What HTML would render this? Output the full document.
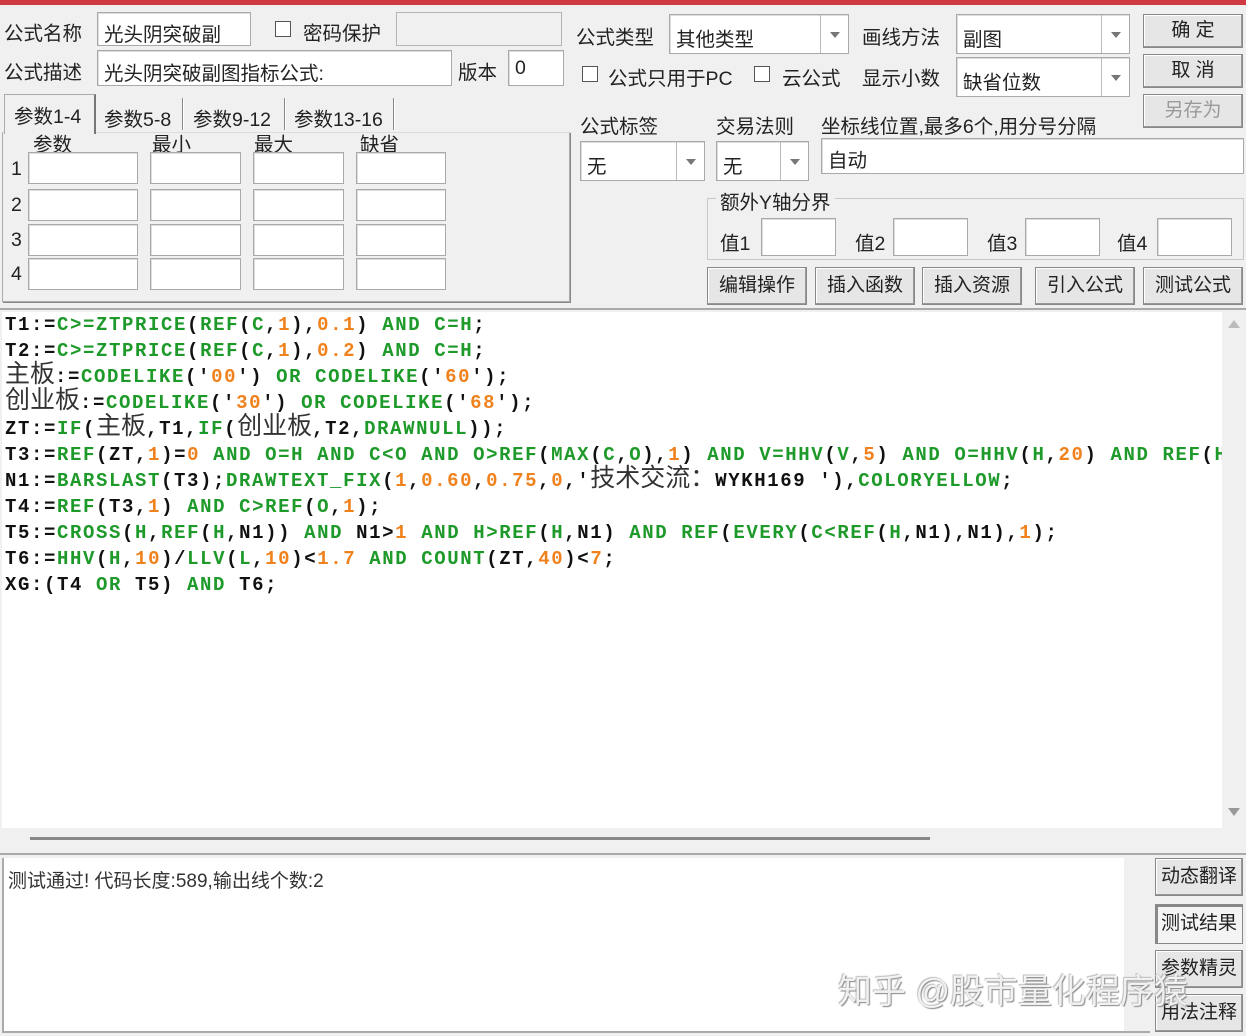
<!DOCTYPE html>
<html><head><meta charset="utf-8"><style>
*{margin:0;padding:0;box-sizing:border-box}
body{width:1246px;height:1036px;background:#f0f0f0;position:relative;overflow:hidden;font-family:"Liberation Sans","Noto Sans CJK SC",sans-serif;font-size:19.5px;color:#222}
.a{position:absolute;white-space:nowrap}
.in{position:absolute;background:#fff;border:1px solid #a9a9a9;box-shadow:inset 1px 1px 0 #ddd}
.ro{position:absolute;background:#f0f0f0;border:1px solid #b4b4b4}
.cb{position:absolute;width:16px;height:16px;background:#fff;border:1px solid #555}
.btn{position:absolute;background:#e6e6e6;border:1px solid #888;box-shadow:inset -1px -1px 0 #999,inset 1px 1px 0 #fff;text-align:center;font-size:19px}
.dd{position:absolute;right:0;top:0;bottom:0;width:28px;border-left:1px solid #bbb}
.dd:after{content:"";position:absolute;left:9px;top:50%;margin-top:-2px;border-left:5px solid transparent;border-right:5px solid transparent;border-top:6px solid #777}
#code{position:absolute;left:2px;top:312px;width:1220px;height:516px;background:#fff;overflow:hidden}
.ln{position:absolute;left:3px;height:26px;line-height:26px;font-family:"Liberation Mono",monospace;font-weight:bold;font-size:19px;letter-spacing:1.6px;white-space:nowrap;color:#111}
.ln .g{color:#1e9a2a}.ln .o{color:#f0821e}
.ln .z{font-family:"Liberation Sans","Noto Sans CJK SC",sans-serif;font-weight:normal;font-size:25px;letter-spacing:0;color:#333;line-height:0}
.sep{position:absolute;width:1px;height:32px;top:98px;background:#888;box-shadow:1px 0 0 #fff}
</style></head><body>
<div class="a" style="left:0;top:0;width:1246px;height:5px;background:#cf3a42"></div>

<div class="a" style="left:4px;top:17px">公式名称</div>
<div class="in" style="left:97px;top:12px;width:154px;height:34px"><span class="a" style="left:6px;top:5px">光头阴突破副</span></div>
<div class="cb" style="left:275px;top:21px"></div>
<div class="a" style="left:303px;top:17px">密码保护</div>
<div class="ro" style="left:396px;top:12px;width:166px;height:34px"></div>
<div class="a" style="left:4px;top:56px">公式描述</div>
<div class="in" style="left:97px;top:50px;width:355px;height:36px"><span class="a" style="left:6px;top:6px">光头阴突破副图指标公式:</span></div>
<div class="a" style="left:458px;top:56px">版本</div>
<div class="in" style="left:508px;top:50px;width:56px;height:36px"><span class="a" style="left:6px;top:6px">0</span></div>

<!-- tabs -->
<div class="a" style="left:2px;top:132px;width:568px;height:170px;border:1px solid #aaa;border-top:1px solid #ddd;box-shadow:1px 1px 0 #888"></div>
<div class="a" style="left:4px;top:94px;width:92px;height:40px;border:1px solid #aaa;border-right:2px solid #777;border-bottom:none;background:#f0f0f0"></div>
<div class="a" style="left:14px;top:100px">参数1-4</div>
<div class="sep" style="left:182px"></div>
<div class="a" style="left:104px;top:103px">参数5-8</div>
<div class="sep" style="left:284px"></div>
<div class="a" style="left:193px;top:103px">参数9-12</div>
<div class="sep" style="left:393px"></div>
<div class="a" style="left:294px;top:103px">参数13-16</div>
<div class="a" style="left:33px;top:128px">参数</div>
<div class="a" style="left:152px;top:128px">最小</div>
<div class="a" style="left:254px;top:128px">最大</div>
<div class="a" style="left:360px;top:128px">缺省</div>
<div class="a" style="left:11px;top:158px">1</div><div class="a" style="left:11px;top:194px">2</div><div class="a" style="left:11px;top:229px">3</div><div class="a" style="left:11px;top:263px">4</div>
<div class="in" style="left:28px;top:152px;width:110px;height:32px"></div><div class="in" style="left:150px;top:152px;width:91px;height:32px"></div><div class="in" style="left:253px;top:152px;width:91px;height:32px"></div><div class="in" style="left:356px;top:152px;width:90px;height:32px"></div>
<div class="in" style="left:28px;top:189px;width:110px;height:32px"></div><div class="in" style="left:150px;top:189px;width:91px;height:32px"></div><div class="in" style="left:253px;top:189px;width:91px;height:32px"></div><div class="in" style="left:356px;top:189px;width:90px;height:32px"></div>
<div class="in" style="left:28px;top:224px;width:110px;height:32px"></div><div class="in" style="left:150px;top:224px;width:91px;height:32px"></div><div class="in" style="left:253px;top:224px;width:91px;height:32px"></div><div class="in" style="left:356px;top:224px;width:90px;height:32px"></div>
<div class="in" style="left:28px;top:258px;width:110px;height:32px"></div><div class="in" style="left:150px;top:258px;width:91px;height:32px"></div><div class="in" style="left:253px;top:258px;width:91px;height:32px"></div><div class="in" style="left:356px;top:258px;width:90px;height:32px"></div>

<!-- right top -->
<div class="a" style="left:576px;top:21px">公式类型</div>
<div class="in" style="left:669px;top:14px;width:180px;height:40px"><span class="a" style="left:6px;top:8px">其他类型</span><div class="dd"></div></div>
<div class="a" style="left:862px;top:21px">画线方法</div>
<div class="in" style="left:956px;top:14px;width:174px;height:40px"><span class="a" style="left:6px;top:8px">副图</span><div class="dd"></div></div>
<div class="btn" style="left:1143px;top:14px;width:100px;height:34px;line-height:32px">确 定</div>
<div class="cb" style="left:582px;top:66px"></div>
<div class="a" style="left:608px;top:62px">公式只用于PC</div>
<div class="cb" style="left:754px;top:66px"></div>
<div class="a" style="left:782px;top:62px">云公式</div>
<div class="a" style="left:862px;top:62px">显示小数</div>
<div class="in" style="left:956px;top:57px;width:174px;height:40px"><span class="a" style="left:6px;top:8px">缺省位数</span><div class="dd"></div></div>
<div class="btn" style="left:1143px;top:54px;width:100px;height:34px;line-height:32px">取 消</div>
<div class="btn" style="left:1143px;top:94px;width:100px;height:34px;line-height:32px;color:#999">另存为</div>

<div class="a" style="left:580px;top:110px">公式标签</div>
<div class="a" style="left:716px;top:110px">交易法则</div>
<div class="a" style="left:821px;top:110px">坐标线位置,最多6个,用分号分隔</div>
<div class="in" style="left:580px;top:141px;width:125px;height:40px"><span class="a" style="left:6px;top:8px">无</span><div class="dd"></div></div>
<div class="in" style="left:716px;top:141px;width:93px;height:40px"><span class="a" style="left:6px;top:8px">无</span><div class="dd"></div></div>
<div class="in" style="left:821px;top:138px;width:423px;height:36px"><span class="a" style="left:6px;top:5px">自动</span></div>

<div class="a" style="left:707px;top:198px;width:537px;height:62px;border:1px solid #c8c8c8"></div>
<div class="a" style="left:716px;top:186px;background:#f0f0f0;padding:0 4px">额外Y轴分界</div>
<div class="a" style="left:720px;top:227px">值1</div><div class="in" style="left:761px;top:218px;width:75px;height:38px"></div>
<div class="a" style="left:855px;top:227px">值2</div><div class="in" style="left:893px;top:218px;width:75px;height:38px"></div>
<div class="a" style="left:987px;top:227px">值3</div><div class="in" style="left:1025px;top:218px;width:75px;height:38px"></div>
<div class="a" style="left:1117px;top:227px">值4</div><div class="in" style="left:1157px;top:218px;width:75px;height:38px"></div>

<div class="btn" style="left:707px;top:267px;width:100px;height:38px;line-height:36px">编辑操作</div>
<div class="btn" style="left:815px;top:267px;width:100px;height:38px;line-height:36px">插入函数</div>
<div class="btn" style="left:922px;top:267px;width:100px;height:38px;line-height:36px">插入资源</div>
<div class="btn" style="left:1035px;top:267px;width:100px;height:38px;line-height:36px">引入公式</div>
<div class="btn" style="left:1143px;top:267px;width:100px;height:38px;line-height:36px">测试公式</div>

<div class="a" style="left:0;top:308px;width:1246px;height:2px;background:#aaa"></div>
<div id="code">
<div class="ln" style="top:0">T1:=<span class="g">C&gt;=ZTPRICE</span>(<span class="g">REF</span>(<span class="g">C</span>,<span class="o">1</span>),<span class="o">0.1</span>) <span class="g">AND C=H</span>;</div>
<div class="ln" style="top:26px">T2:=<span class="g">C&gt;=ZTPRICE</span>(<span class="g">REF</span>(<span class="g">C</span>,<span class="o">1</span>),<span class="o">0.2</span>) <span class="g">AND C=H</span>;</div>
<div class="ln" style="top:52px"><span class="z">主板</span>:=<span class="g">CODELIKE</span>('<span class="o">00</span>') <span class="g">OR CODELIKE</span>('<span class="o">60</span>');</div>
<div class="ln" style="top:78px"><span class="z">创业板</span>:=<span class="g">CODELIKE</span>('<span class="o">30</span>') <span class="g">OR CODELIKE</span>('<span class="o">68</span>');</div>
<div class="ln" style="top:104px">ZT:=<span class="g">IF</span>(<span class="z">主板</span>,T1,<span class="g">IF</span>(<span class="z">创业板</span>,T2,<span class="g">DRAWNULL</span>));</div>
<div class="ln" style="top:130px">T3:=<span class="g">REF</span>(ZT,<span class="o">1</span>)=<span class="o">0</span> <span class="g">AND O=H AND C&lt;O AND O&gt;REF</span>(<span class="g">MAX</span>(<span class="g">C</span>,<span class="g">O</span>),<span class="o">1</span>) <span class="g">AND V=HHV</span>(<span class="g">V</span>,<span class="o">5</span>) <span class="g">AND O=HHV</span>(<span class="g">H</span>,<span class="o">20</span>) <span class="g">AND REF</span>(<span class="g">H</span></div>
<div class="ln" style="top:156px">N1:=<span class="g">BARSLAST</span>(T3);<span class="g">DRAWTEXT_FIX</span>(<span class="o">1</span>,<span class="o">0.60</span>,<span class="o">0.75</span>,<span class="o">0</span>,'<span class="z">技术交流：</span>WYKH169 '),<span class="g">COLORYELLOW</span>;</div>
<div class="ln" style="top:182px">T4:=<span class="g">REF</span>(T3,<span class="o">1</span>) <span class="g">AND C&gt;REF</span>(<span class="g">O</span>,<span class="o">1</span>);</div>
<div class="ln" style="top:208px">T5:=<span class="g">CROSS</span>(<span class="g">H</span>,<span class="g">REF</span>(<span class="g">H</span>,N1)) <span class="g">AND</span> N1&gt;<span class="o">1</span> <span class="g">AND H&gt;REF</span>(<span class="g">H</span>,N1) <span class="g">AND REF</span>(<span class="g">EVERY</span>(<span class="g">C&lt;REF</span>(<span class="g">H</span>,N1),N1),<span class="o">1</span>);</div>
<div class="ln" style="top:234px">T6:=<span class="g">HHV</span>(<span class="g">H</span>,<span class="o">10</span>)/<span class="g">LLV</span>(<span class="g">L</span>,<span class="o">10</span>)&lt;<span class="o">1.7</span> <span class="g">AND COUNT</span>(ZT,<span class="o">40</span>)&lt;<span class="o">7</span>;</div>
<div class="ln" style="top:260px">XG:(T4 <span class="g">OR</span> T5) <span class="g">AND</span> T6;</div>
</div>
<div class="a" style="left:1228px;top:320px;border-left:6px solid transparent;border-right:6px solid transparent;border-bottom:8px solid #bbb"></div>
<div class="a" style="left:1228px;top:808px;border-left:6px solid transparent;border-right:6px solid transparent;border-top:8px solid #999"></div>
<div class="a" style="left:30px;top:837px;width:900px;height:3px;background:#888"></div>
<div class="a" style="left:0;top:853px;width:1246px;height:2px;background:#aaa"></div>

<div class="a" style="left:2px;top:858px;width:1122px;height:174px;background:#fff;border-left:2px solid #aaa"></div>
<div class="a" style="left:8px;top:866px;font-size:19px;color:#333">测试通过! 代码长度:589,输出线个数:2</div>
<div class="a" style="left:2px;top:1031px;width:1148px;height:2px;background:#aaa"></div>
<div class="btn" style="left:1155px;top:858px;width:88px;height:38px;line-height:36px">动态翻译</div>
<div class="btn" style="left:1155px;top:904px;width:88px;height:40px;line-height:38px;background:#f4f4f4;box-shadow:inset 2px 2px 0 #888">测试结果</div>
<div class="btn" style="left:1155px;top:950px;width:88px;height:38px;line-height:36px">参数精灵</div>
<div class="btn" style="left:1155px;top:994px;width:88px;height:38px;line-height:36px">用法注释</div>
<div class="a" style="left:838px;top:964px;font-size:34px;color:rgba(255,255,255,0.85);text-shadow:1px 1px 1px #888,-1px -1px 1px #bbb">知乎 @股市量化程序猿</div>
</body></html>
